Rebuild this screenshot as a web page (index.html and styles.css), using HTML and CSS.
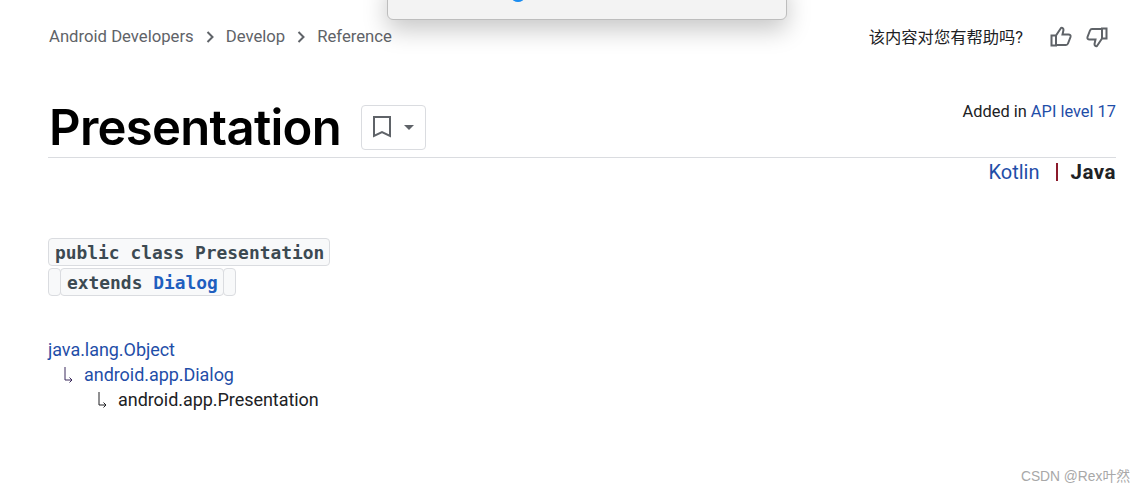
FILE: index.html
```html
<!DOCTYPE html>
<html lang="en">
<head>
    <meta charset="UTF-8">
    <title>Presentation | Android Developers</title>
    <link rel="stylesheet" href="styles.css">
</head>
<body>
    <div class="popup"><span class="popup-dot"></span></div>

    <div class="page">
        <div class="topbar">
            <nav class="crumbs">
                <a href="#">Android Developers</a>
                <svg class="crumb-arrow" viewBox="0 0 8 12"><path d="M1.500 1l5 5-5 5" fill="none" stroke="#5f6368" stroke-width="2"/></svg>
                <a href="#">Develop</a>
                <svg class="crumb-arrow" viewBox="0 0 8 12"><path d="M1.500 1l5 5-5 5" fill="none" stroke="#5f6368" stroke-width="2"/></svg>
                <a href="#">Reference</a>
            </nav>
            <div class="feedback">
                <span class="feedback-text">该内容对您有帮助吗?</span>
                <svg class="thumb" viewBox="0 0 22 22"><path d="M1.500 9.500h4.500v10h-4.500zM6 9.500l5-7.500c1.500-.5 2.500.5 2.500 2l-1 4.500h6c1.500 0 2.500 1 2 2.500l-2.500 6.500c-.4 1-1 1.500-2 1.500h-10" fill="none" stroke="#5f6368" stroke-width="2"/></svg>
                <svg class="thumb thumb-down" viewBox="0 0 22 22"><path d="M1.500 9.500h4.500v10h-4.500zM6 9.500l5-7.500c1.500-.5 2.500.5 2.500 2l-1 4.500h6c1.500 0 2.500 1 2 2.500l-2.500 6.500c-.4 1-1 1.500-2 1.500h-10" fill="none" stroke="#5f6368" stroke-width="2"/></svg>
            </div>
        </div>

        <div class="title-row">
            <h1>Presentation</h1>
            <button class="bookmark">
                <svg class="bookmark-icon" viewBox="0 0 18 22"><path d="M1 1h16v19l-8-4-8 4z" fill="none" stroke="#5f6368" stroke-width="2"/></svg>
                <span class="caret"></span>
            </button>
            <div class="api-level">Added in <a href="#">API level 17</a></div>
        </div>

        <div class="lang-switch">
            <a href="#">Kotlin</a>
            <span class="lang-sep"></span>
            <b>Java</b>
        </div>

        <div class="signature">
            <div class="sig-line"><code class="sig">public class Presentation</code></div>
            <div class="sig-line">
                <span class="sig-cap"></span>
                <code class="sig">extends <a href="#">Dialog</a></code>
                <span class="sig-cap"></span>
            </div>
        </div>

        <div class="tree">
            <div><a href="#">java.lang.Object</a></div>
            <div class="tree-row level-1">
                <svg class="tree-arrow" viewBox="0 0 9 16"><path d="M1 0v13h7M5.500 10.500l2.500 2.500-2.500 2.500" fill="none" stroke="#3b2a5c" stroke-width="1"/></svg>
                <a href="#">android.app.Dialog</a>
            </div>
            <div class="tree-row level-2">
                <svg class="tree-arrow" viewBox="0 0 9 16"><path d="M1 0v13h7M5.500 10.500l2.500 2.500-2.500 2.500" fill="none" stroke="#202124" stroke-width="1"/></svg>
                android.app.Presentation
            </div>
        </div>
    </div>

    <div class="watermark">CSDN @Rex叶然</div>
</body>
</html>
```

FILE: styles.css
```css
html, body {
    margin: 0;
    padding: 0;
    height: 100%;
    background-color: #ffffff;
    color: #202124;
    font-family: Roboto, "Noto Sans CJK SC", sans-serif;
    overflow: hidden;
}

a {
    color: #1f4ea8;
    text-decoration: none;
}

.page {
    padding: 0 29px 0 48px;
}

.popup {
    position: absolute;
    top: -20px;
    left: 387px;
    width: 398px;
    height: 38px;
    background-color: #f3f3f3;
    border: 1px solid #bdbdbd;
    border-radius: 6px;
    box-shadow: 0 10px 24px rgba(0, 0, 0, 0.22);
}

.popup-dot {
    position: absolute;
    top: 13px;
    left: 124px;
    width: 12px;
    height: 8px;
    border-radius: 50%;
    background-color: #1a8cf0;
}

.topbar {
    display: flex;
    justify-content: space-between;
    align-items: center;
    padding-top: 24px;
    height: 25px;
}

.crumbs {
    display: flex;
    align-items: center;
    margin-left: 1px;
    font-size: 16.7px;
}

.crumbs a {
    color: #5f6368;
}

.crumb-arrow {
    width: 8px;
    height: 12px;
    margin: 0 12px;
}

.feedback {
    display: flex;
    align-items: center;
}

.feedback-text {
    position: relative;
    top: -1px;
    font-size: 16.3px;
    color: #202124;
    margin-right: 27px;
}

.thumb {
    width: 22px;
    height: 22px;
    margin-right: 14px;
}

.thumb-down {
    transform: rotate(180deg);
    margin-right: 8px;
}

.title-row {
    display: flex;
    align-items: center;
    position: relative;
    margin-top: 48px;
    height: 60px;
    border-bottom: 1px solid #dadce0;
}

h1 {
    margin: 0 0 0 1px;
    font-family: Inter, Roboto, sans-serif;
    font-size: 49px;
    font-weight: 600;
    color: #000000;
    letter-spacing: -0.7px;
}

.bookmark {
    display: flex;
    align-items: center;
    gap: 13px;
    width: 65px;
    height: 45px;
    margin-left: 20px;
    padding: 0 0 0 11px;
    background-color: #ffffff;
    border: 1px solid #dadce0;
    border-radius: 4px;
}

.bookmark-icon {
    width: 18px;
    height: 22px;
}

.caret {
    border-top: 5px solid #5f6368;
    border-left: 5px solid transparent;
    border-right: 5px solid transparent;
}

.api-level {
    position: absolute;
    right: 0;
    top: 5px;
    font-size: 16.4px;
}

.lang-switch {
    display: flex;
    justify-content: flex-end;
    align-items: center;
    height: 28px;
    font-size: 20px;
}

.lang-sep {
    width: 2px;
    height: 18px;
    margin: 0 13px 0 16px;
    background-color: #8b1a2b;
}

.lang-switch b {
    font-size: 20.500px;
    font-weight: 700;
    letter-spacing: 0.5px;
}

.signature {
    display: flex;
    flex-direction: column;
    gap: 2px;
    margin-top: 52px;
}

.sig-line {
    display: flex;
}

.sig {
    display: block;
    height: 25px;
    padding: 1px 5px 0 6px;
    font-family: "DejaVu Sans Mono", "Liberation Mono", monospace;
    font-size: 17.9px;
    font-weight: 700;
    line-height: 26px;
    color: #3c4a52;
    background-color: #f8f9fa;
    border: 1px solid #dadce0;
    border-radius: 4px;
    white-space: pre;
}

.sig a {
    color: #1f5fbf;
}

.sig-cap {
    width: 11px;
    background-color: #f8f9fa;
    border: 1px solid #dadce0;
    border-radius: 4px;
}

.sig-cap:first-child {
    margin-right: -1px;
}

.sig-cap:last-child {
    margin-left: -1px;
}

.tree {
    margin-top: 41px;
    font-size: 18px;
    line-height: 25px;
    letter-spacing: -0.05px;
}

.tree-row {
    display: flex;
    align-items: center;
}

.tree-arrow {
    width: 9px;
    height: 16px;
    margin-right: 11px;
}

.level-1 {
    padding-left: 16px;
}

.level-2 {
    padding-left: 50px;
}

.watermark {
    position: absolute;
    right: 15px;
    bottom: 8px;
    font-family: "Liberation Sans", "Noto Sans CJK SC", sans-serif;
    font-size: 13.8px;
    color: #a8a8a8;
}
```
